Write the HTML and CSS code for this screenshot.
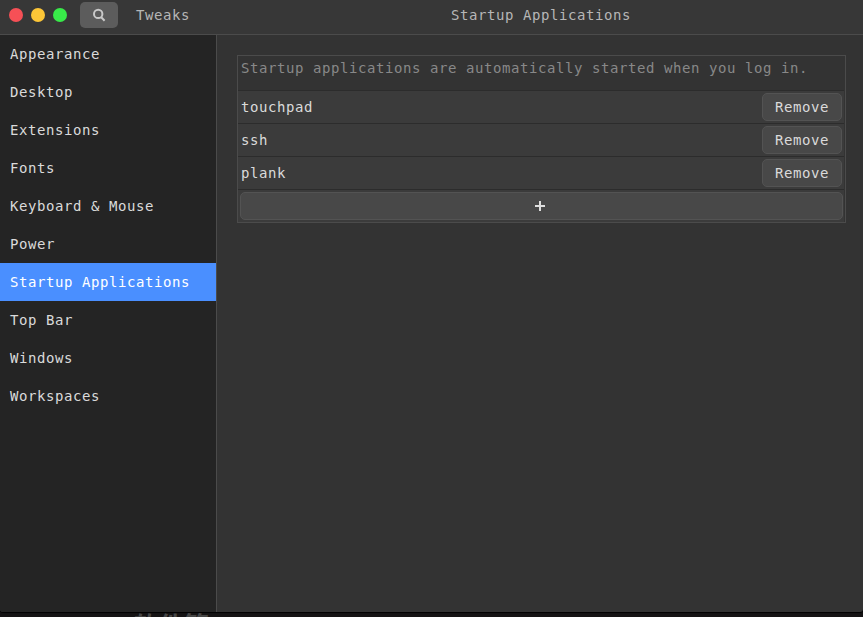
FILE: index.html
```html
<!DOCTYPE html>
<html lang="en">
<head>
<meta charset="utf-8">
<title>Tweaks</title>
<link rel="stylesheet" href="styles.css">
</head>
<body>
<div class="window">
  <header class="titlebar">
    <div class="titlebar-left">
      <span class="dot close"></span><span class="dot minimize"></span><span class="dot maximize"></span>
      <button class="search" aria-label="Search"><svg width="14" height="14" viewBox="0 0 14 14"><circle cx="6.2" cy="5.9" r="4.2"/><path d="M9 9L12.6 12.8"/></svg></button>
      <span class="app-name">Tweaks</span>
    </div>
    <h1 class="title">Startup Applications</h1>
  </header>
  <div class="body">
    <nav class="sidebar">
      <a>Appearance</a><a>Desktop</a><a>Extensions</a><a>Fonts</a><a>Keyboard &amp; Mouse</a><a>Power</a><a class="active">Startup Applications</a><a>Top Bar</a><a>Windows</a><a>Workspaces</a>
    </nav>
    <main class="content">
      <section class="list">
        <p class="note">Startup applications are automatically started when you log in.</p>
        <div class="row"><span>touchpad</span><button class="btn">Remove</button></div>
        <div class="row"><span>ssh</span><button class="btn">Remove</button></div>
        <div class="row"><span>plank</span><button class="btn">Remove</button></div>
        <div class="add-row"><button class="btn add" aria-label="Add"><svg width="10" height="10" viewBox="0 0 10 10"><path d="M4 0h2v4h4v2H6v4H4V6H0V4h4z"/></svg></button></div>
      </section>
    </main>
  </div>
</div>
<div class="behind" lang="zh-CN">软件管</div>
</body>
</html>
```
FILE: styles.css
```css
* { box-sizing: border-box; }
body {
  margin: 0;
  height: 617px;
  overflow: hidden;
  background: #151314;
  color: #dadada;
  font: 14px/20px "DejaVu Sans Mono", monospace;
  letter-spacing: 0.572px;
}
.window {
  height: 612px;
  display: flex;
  flex-direction: column;
  background: #333;
  border-radius: 0 0 3px 3px;
  overflow: hidden;
  box-shadow: 0 1px 1px #000;
}
.titlebar {
  height: 35px;
  flex: none;
  display: flex;
  border-bottom: 1px solid #4b4b4b;
  background: #373737;
  color: #b6b6b6;
}
.titlebar-left {
  width: 217px;
  height: 30px;
  padding-left: 9px;
  display: flex;
  align-items: center;
}
.dot {
  width: 14px;
  height: 14px;
  margin-right: 8px;
  border-radius: 50%;
}
.close { background: #f65056; }
.minimize { background: #fdc637; }
.maximize { background: #38ea49; }
.search {
  width: 38px;
  height: 26px;
  margin: 0 18px 0 5px;
  padding: 0;
  display: flex;
  align-items: center;
  justify-content: center;
  border: 0;
  border-radius: 5px;
  background: #5c5c5c;
}
.search svg { fill: none; stroke: #c9c9c9; stroke-width: 2; }
.title {
  flex: 1;
  margin: 0 0 0 2px;
  font: inherit;
  line-height: 30px;
  text-align: center;
}
.body { flex: 1; display: flex; }
.sidebar {
  width: 217px;
  border-right: 1px solid #4b4b4b;
  background: #242424;
}
.sidebar a { display: block; height: 38px; padding-left: 10px; line-height: 38px; }
.sidebar .active { background: #4a8fff; color: #fff; }
.content { flex: 1; padding: 20px 17px 0 20px; }
.list {
  height: 168px;
  padding: 0 1px 0 0;
  border: 1px solid #4b4b4b;
}
.note { height: 34px; margin: 0; padding: 2px 0 0 3px; color: #888; }
.row {
  height: 33px;
  padding: 0 2px 0 3px;
  display: flex;
  align-items: center;
  justify-content: space-between;
  border-top: 1px solid #2c2c2c;
  background: #3b3b3b;
}
.btn {
  width: 80px;
  height: 28px;
  padding: 0;
  display: flex;
  align-items: center;
  justify-content: center;
  border: 1px solid #535353;
  border-radius: 5px;
  background: #484848;
  color: inherit;
  font: inherit;
  letter-spacing: inherit;
}
.add-row {
  height: 33px;
  padding: 2px 1px 0 2px;
  border-top: 1px solid #2c2c2c;
  background: #3b3b3b;
}
.add { width: 100%; padding-right: 4px; }
.add svg { fill: #dedede; }
.behind {
  height: 5px;
  padding-left: 134px;
  overflow: hidden;
  color: #464646;
  font: bold 25px/24px "Noto Sans CJK SC", sans-serif;
  letter-spacing: 0;
}
```
